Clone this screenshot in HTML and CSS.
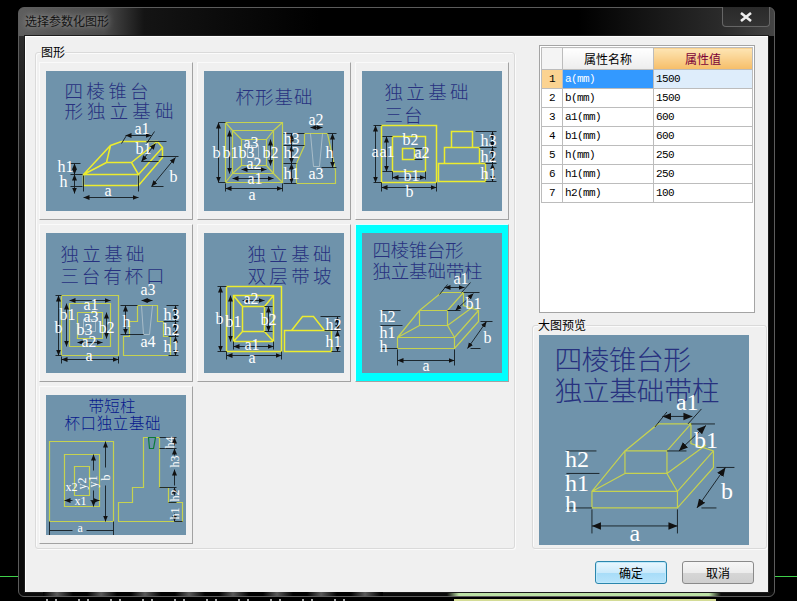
FILE: index.html
```html
<!DOCTYPE html>
<html lang="zh-CN">
<head>
<meta charset="utf-8">
<title>选择参数化图形</title>
<link rel="stylesheet" href="styles.css">
</head>
<body>
<div class="bg-line bg-line-l"></div>
<div class="bg-line bg-line-r"></div>
<div class="bg-strip"></div>
<div class="bg-text"></div>
<div class="window">
  <div class="titlebar">选择参数化图形</div>
  <button class="close" type="button" aria-label="关闭"><svg width="14" height="10" viewBox="0 0 14 10"><path class="close-x" d="M2 1L12 9M12 1L2 9"/></svg></button>
  <div class="client">
    <div class="main">
      <section class="group group-figs">
        <div class="group-label">图形</div>
        <div class="tiles">
          <div class="tile">
            <svg class="fig" width="140" height="140" viewBox="-.5 -.5 140 140">
              <defs><marker id="ar" markerWidth="6" markerHeight="6" refX="6" refY="3" orient="auto-start-reverse" markerUnits="userSpaceOnUse"><path d="M0 .5L6 3L0 5.5z" fill="#111"/></marker></defs>
              <text class="ttl" x="18" y="26" textLength="84">四棱锥台</text>
              <text class="ttl" x="18" y="46" textLength="109">形独立基础</text>
              <g class="y2">
                <path d="M37 103H92V114H37zM37 103L64 74L75 70H111L116 76V86L92 114M92 103L116 76M60 91H85L92 103M37 103L60 91M64 74L60 91M85 91L111 70"/>
              </g>
              <g class="tick"><path d="M37 104V120M92 104V120M75 72L80 64M100 72L108 60M100 70H120M95 90H112M112 85H132M105 115H117M24 92H34M24 103H36M24 115H36"/></g>
              <g class="d" marker-start="url(#ar)" marker-end="url(#ar)">
                <line x1="37" y1="126" x2="92" y2="126"/><line x1="79" y1="64" x2="105" y2="64"/>
                <line x1="109" y1="72" x2="95" y2="90"/><line x1="129" y1="86" x2="105" y2="115"/>
                <line x1="28" y1="92" x2="28" y2="103"/><line x1="28" y1="103" x2="28" y2="122"/>
              </g>
              <g class="t">
                <text x="88" y="62">a1</text><text x="89" y="82">b1</text><text x="123" y="110">b</text>
                <text x="58" y="124">a</text><text x="11" y="100">h1</text><text x="13" y="115">h</text>
              </g>
            </svg>
          </div>
          <div class="tile">
            <svg class="fig" width="140" height="140" viewBox="-.5 -.5 140 140">
              <text class="ttl" x="31" y="32" textLength="77">杯形基础</text>
              <g class="ol">
                <path d="M21 51H78V111H21zM28 59H69V102H28zM37 68H62V94H37zM21 51L28 59M78 51L69 59M21 111L28 102M78 111L69 102M28 59L37 68M69 59L62 68M28 102L37 94M69 102L62 94"/>
                <path d="M100 62H123L131 99V112H92V92L100 74z"/>
              </g>
              <path class="lt" d="M43 74H54V86H43zM106 62L109 95H115L118 62"/>
              <g class="tick"><path d="M14 51H21M14 111H21M21 112V120M78 112V120M79 62H100M79 74H100M79 92H92M79 112H92M123 62H132M117 96H132"/></g>
              <g class="d" marker-start="url(#ar)" marker-end="url(#ar)">
                <line x1="14" y1="51" x2="14" y2="111"/><line x1="25" y1="59" x2="25" y2="102"/>
                <line x1="21" y1="117" x2="78" y2="117"/><line x1="28" y1="107" x2="69" y2="107"/>
                <line x1="37" y1="98" x2="62" y2="98"/><line x1="66" y1="68" x2="66" y2="94"/>
                <line x1="106" y1="56" x2="118" y2="56"/><line x1="87" y1="62" x2="87" y2="74"/>
                <line x1="87" y1="74" x2="87" y2="92"/><line x1="87" y1="92" x2="87" y2="112"/>
                <line x1="128" y1="62" x2="128" y2="96"/>
              </g>
              <g class="t">
                <text x="8" y="86">b</text><text x="18" y="86">b1b3</text><text x="58" y="86">b2</text>
                <text x="39" y="76">a3</text><text x="42" y="97">a2</text><text x="43" y="112">a1</text>
                <text x="44" y="128">a</text><text x="104" y="53">a2</text><text x="79" y="72">h3</text>
                <text x="79" y="86">h2</text><text x="79" y="107">h1</text><text x="121" y="86">h</text><text x="104" y="107">a3</text>
              </g>
            </svg>
          </div>
          <div class="tile">
            <svg class="fig" width="140" height="140" viewBox="-.5 -.5 140 140">
              <text class="ttl" x="22" y="27" textLength="84">独立基础</text>
              <text class="ttl" x="22" y="50" textLength="38">三台</text>
              <g class="y2">
                <path d="M19 54H74V111H19zM30 65H63V100H30zM40 77H52V88H40zM76 92H123V110H76zM82 76H117V92H82zM89 60H110V76H89z"/>
              </g>
              <g class="tick"><path d="M11 54H19M11 111H19M20 65H30M20 100H30M19 111V120M74 111V120M30 100V108M63 100V108M113 60H134M117 76H134M123 92H134M123 110H134M52 77H60M52 88H60"/></g>
              <g class="d" marker-start="url(#ar)" marker-end="url(#ar)">
                <line x1="13" y1="54" x2="13" y2="111"/><line x1="24" y1="65" x2="24" y2="100"/>
                <line x1="19" y1="116" x2="74" y2="116"/><line x1="30" y1="106" x2="63" y2="106"/>
                <line x1="130" y1="60" x2="130" y2="76"/><line x1="130" y1="76" x2="130" y2="92"/><line x1="130" y1="92" x2="130" y2="110"/>
              </g>
              <g class="t">
                <text x="9" y="85">a</text><text x="17" y="85">a1</text><text x="40" y="73">b2</text><text x="52" y="86">a2</text>
                <text x="41" y="109">b1</text><text x="43" y="125">b</text><text x="118" y="74">h3</text><text x="118" y="90">h2</text><text x="118" y="107">h1</text>
              </g>
            </svg>
          </div>
          <div class="tile">
            <svg class="fig" width="140" height="140" viewBox="-.5 -.5 140 140">
              <text class="ttl" x="14" y="27" textLength="84">独立基础</text>
              <text class="ttl" x="14" y="49" textLength="104">三台有杯口</text>
              <g class="ol">
                <path d="M15 62H72V122H15zM23 70H64V113H23zM31 79H56V105H31z"/>
                <path d="M91 72H111V88H117V103H124V122H77V103H83V88H91z"/>
              </g>
              <path class="lt" d="M37 86H49V98H37zM95 72L97 101H103L106 72"/>
              <g class="tick"><path d="M9 62H15M9 122H15M15 123V130M72 123V130M74 72H91M74 101H97M120 72H132M117 88H132M122 103H132M122 122H132"/></g>
              <g class="d" marker-start="url(#ar)" marker-end="url(#ar)">
                <line x1="12" y1="62" x2="12" y2="122"/><line x1="20" y1="70" x2="20" y2="113"/>
                <line x1="15" y1="126" x2="72" y2="126"/><line x1="23" y1="67" x2="64" y2="67"/>
                <line x1="31" y1="109" x2="56" y2="109"/><line x1="60" y1="79" x2="60" y2="105"/>
                <line x1="79" y1="72" x2="79" y2="101"/><line x1="95" y1="67" x2="106" y2="67"/>
                <line x1="129" y1="72" x2="129" y2="88"/><line x1="129" y1="88" x2="129" y2="103"/><line x1="129" y1="103" x2="129" y2="122"/>
              </g>
              <g class="t">
                <text x="8" y="99">b</text><text x="13" y="86">b1</text><text x="37" y="76">a1</text><text x="37" y="88">a3</text>
                <text x="30" y="101">b3</text><text x="52" y="99">b2</text><text x="35" y="113">a2</text><text x="39" y="127">a</text>
                <text x="94" y="61">a3</text><text x="76" y="93">h</text><text x="94" y="113">a4</text>
                <text x="117" y="86">h3</text><text x="117" y="101">h2</text><text x="117" y="118">h1</text>
              </g>
            </svg>
          </div>
          <div class="tile">
            <svg class="fig" width="140" height="140" viewBox="-.5 -.5 140 140">
              <text class="ttl" x="43" y="27" textLength="84">独立基础</text>
              <text class="ttl" x="43" y="49" textLength="84">双层带坡</text>
              <g class="y2">
                <path d="M22 53H77V118H22zM29 62H69V108H29zM38 73H60V98H38zM29 62L38 73M69 62L60 73M29 108L38 98M69 108L60 98"/>
                <path d="M80 97H127V118H80zM87 97L98 83H109L120 97"/>
              </g>
              <g class="tick"><path d="M13 53H22M13 118H22M22 118V126M77 118V126M29 108V116M69 108V116M116 83H136M120 97H136M127 118H136M60 73H68M60 98H68"/></g>
              <g class="d" marker-start="url(#ar)" marker-end="url(#ar)">
                <line x1="16" y1="53" x2="16" y2="118"/><line x1="26" y1="62" x2="26" y2="108"/>
                <line x1="22" y1="122" x2="77" y2="122"/><line x1="29" y1="113" x2="69" y2="113"/>
                <line x1="38" y1="67" x2="60" y2="67"/><line x1="64" y1="73" x2="64" y2="98"/>
                <line x1="133" y1="83" x2="133" y2="97"/><line x1="133" y1="97" x2="133" y2="118"/>
              </g>
              <g class="t">
                <text x="11" y="90">b</text><text x="21" y="93">b1</text><text x="39" y="70">a2</text><text x="56" y="91">b2</text>
                <text x="40" y="116">a1</text><text x="44" y="129">a</text><text x="121" y="96">h2</text><text x="121" y="113">h1</text>
              </g>
            </svg>
          </div>
          <div class="tile tile-selected">
            <svg class="fig" width="140" height="140" viewBox="-.5 -.5 140 140">
              <text class="ttl" x="10" y="23" textLength="91">四棱锥台形</text>
              <text class="ttl" x="10" y="44" textLength="110">独立基础带柱</text>
              <g class="ol">
                <path d="M35 104H92V115H35zM57 77H85V92H57zM35 104L57 77L79 59H101L85 77M101 59V72L116 77V88L92 115M92 104L116 77M35 104L57 92M85 92L92 104M85 92L111 73"/>
              </g>
              <g class="tick"><path d="M35 116V132M92 116V132M77 61L85 51M99 59L108 49M101 59H117M85 77H98M108 115H118M118 88H130M18 77H38M18 92H40M18 115H35"/></g>
              <g class="d" marker-start="url(#ar)" marker-end="url(#ar)">
                <line x1="35" y1="127" x2="92" y2="127"/><line x1="82" y1="54" x2="102" y2="54"/>
                <line x1="111" y1="60" x2="93" y2="77"/><line x1="124" y1="88" x2="105" y2="115"/>
              </g>
              <g class="t">
                <text x="91" y="50">a1</text><text x="103" y="75">b1</text><text x="121" y="109">b</text><text x="60" y="137">a</text>
                <text x="17" y="88">h2</text><text x="17" y="104">h1</text><text x="17" y="118">h</text>
              </g>
            </svg>
          </div>
          <div class="tile">
            <svg class="fig" width="140" height="140" viewBox="-.5 -.5 140 140">
              <text class="ttl ttl-navy" x="42" y="16" textLength="47">带短柱</text>
              <text class="ttl ttl-navy" x="18" y="33" textLength="96">杯口独立基础</text>
              <g class="ol">
                <path d="M3 46H67V126H3zM18 59H53V111H18zM28 71H43V100H28z"/>
                <path d="M97 42H113V92H122V107H136V126H72V107H86V92H97z"/>
              </g>
              <path class="grn" d="M102 42H109L107 53H103z"/>
              <g class="tick"><path d="M3 126V140M67 126V140M3 135H26M40 135H67M113 42H130M113 53H130M113 92H130M122 107H130M128 126H136"/></g>
              <g class="d" marker-end="url(#ar)">
                <line x1="59" y1="90" x2="59" y2="126"/><line x1="59" y1="72" x2="59" y2="46"/>
                <line x1="47" y1="95" x2="47" y2="111"/><line x1="47" y1="75" x2="47" y2="59"/>
                <line x1="26" y1="105" x2="18" y2="105"/><line x1="44" y1="105" x2="53" y2="105"/>
                <line x1="128" y1="100" x2="128" y2="92"/><line x1="128" y1="90" x2="128" y2="74"/><line x1="128" y1="60" x2="128" y2="53"/>
                <line x1="128" y1="118" x2="128" y2="126"/><line x1="128" y1="50" x2="128" y2="42"/>
              </g>
              <g class="t t-small">
                <text x="19" y="95">x2</text><text x="28" y="109">x1</text><text x="31" y="136">a</text>
                <text transform="translate(63 85) rotate(-90)">b</text>
                <text transform="translate(50 92) rotate(-90)">y1</text>
                <text transform="translate(39 94) rotate(-90)">y2</text>
                <text transform="translate(127 53) rotate(-90)">h4</text>
                <text transform="translate(132 72) rotate(-90)">h3</text>
                <text transform="translate(132 106) rotate(-90)">h2</text>
                <text transform="translate(132 124) rotate(-90)">h1</text>
              </g>
            </svg>
          </div>
        </div>
      </section>
      <div class="side">
        <div class="grid-panel">
          <table class="props">
            <colgroup><col class="c-idx"><col class="c-name"><col class="c-val"></colgroup>
            <thead><tr><th class="h-idx"></th><th class="h-name">属性名称</th><th class="h-val">属性值</th></tr></thead>
            <tbody>
              <tr class="row-active"><td class="idx">1</td><td class="name">a(mm)</td><td class="val">1500</td></tr>
              <tr><td class="idx">2</td><td class="name">b(mm)</td><td class="val">1500</td></tr>
              <tr><td class="idx">3</td><td class="name">a1(mm)</td><td class="val">600</td></tr>
              <tr><td class="idx">4</td><td class="name">b1(mm)</td><td class="val">600</td></tr>
              <tr><td class="idx">5</td><td class="name">h(mm)</td><td class="val">250</td></tr>
              <tr><td class="idx">6</td><td class="name">h1(mm)</td><td class="val">250</td></tr>
              <tr><td class="idx">7</td><td class="name">h2(mm)</td><td class="val">100</td></tr>
            </tbody>
          </table>
        </div>
        <section class="group group-preview">
          <div class="group-label">大图预览</div>
          <svg class="fig" width="210" height="210" viewBox="-.3 -.3 140 140">
            <text class="ttl" x="10" y="23" textLength="91">四棱锥台形</text>
            <text class="ttl" x="10" y="44" textLength="110">独立基础带柱</text>
            <g class="ol ol-thin">
              <path d="M35 104H92V115H35zM57 77H85V92H57zM35 104L57 77L79 59H101L85 77M101 59V72L116 77V88L92 115M92 104L116 77M35 104L57 92M85 92L92 104M85 92L111 73"/>
            </g>
            <g class="tick tick-thin"><path d="M35 116V132M92 116V132M77 61L85 51M99 59L108 49M101 59H117M85 77H98M108 115H118M118 88H130M18 77H38M18 92H40M18 115H35"/></g>
            <g class="d d-thin" marker-start="url(#ar)" marker-end="url(#ar)">
              <line x1="35" y1="127" x2="92" y2="127"/><line x1="82" y1="54" x2="102" y2="54"/>
              <line x1="111" y1="60" x2="93" y2="77"/><line x1="124" y1="88" x2="105" y2="115"/>
            </g>
            <g class="t">
              <text x="91" y="50">a1</text><text x="103" y="75">b1</text><text x="121" y="109">b</text><text x="60" y="137">a</text>
              <text x="17" y="88">h2</text><text x="17" y="104">h1</text><text x="17" y="118">h</text>
            </g>
          </svg>
        </section>
      </div>
    </div>
    <div class="footer">
      <button class="btn btn-primary" type="button">确定</button>
      <button class="btn" type="button">取消</button>
    </div>
  </div>
</div>
</body>
</html>
```
FILE: styles.css
```css
* { box-sizing: border-box; }
html, body { margin: 0; padding: 0; }
body {
  width: 797px;
  height: 601px;
  overflow: hidden;
  position: relative;
  background: #000;
  padding: 7px 0 0 18px;
  font-family: "Noto Sans CJK SC", "Liberation Sans", sans-serif;
  font-size: 12px;
  color: #000;
}

/* desktop behind the dialog */
.bg-line { position: absolute; top: 576px; height: 1px; background: #3fd04a; }
.bg-line-l { left: 0; width: 18px; }
.bg-line-r { left: 775px; width: 22px; }
.bg-strip { position: absolute; left: 454px; top: 599px; width: 262px; height: 2px; background: #d4dc96; }
.bg-text {
  position: absolute; left: 46px; top: 599px; width: 305px; height: 2px;
  background: repeating-linear-gradient(90deg, #a8a8a8 0 2px, #000 2px 9px, #a8a8a8 9px 11px, #000 11px 32px);
}

/* window frame */
.window {
  position: relative;
  width: 757px;
  height: 590px;
  padding: 0 5px 4px;
  border: 1px solid #5c5c5c;
  border-radius: 6px;
  background:
    linear-gradient(90deg, #0a0a0a 0 428px, #bde2a5 440px 690px, #0a0a0a 702px) left bottom / 100% 4px no-repeat,
    linear-gradient(90deg, #5e5e5e 0, #4c4c4c 85px, #141414 125px, #000 300px, #000 560px, #2a2a2a 700px, #444 100%) left top / 100% 28px no-repeat,
    linear-gradient(180deg, #333 0, #0a0a0a 200px) left top / 6px 100% no-repeat,
    #050505;
}
.window::after {
  content: "";
  position: absolute;
  left: 24px;
  bottom: 0;
  width: 340px;
  height: 4px;
  background: repeating-linear-gradient(90deg, #000 0, #5a5a5a 14px, #000 30px, #000 44px);
}
.titlebar {
  height: 27px;
  padding: 5px 0 0 1px;
  font-size: 12px;
  line-height: 16px;
  color: #141414;
  text-shadow: 0 0 6px #bbb;
}
.close {
  position: absolute;
  top: -1px;
  right: 4px;
  width: 48px;
  height: 20px;
  padding: 0;
  border: 1px solid #666;
  border-top: 0;
  border-radius: 0 0 4px 4px;
  background: linear-gradient(180deg, #2a2a2a, #333);
  display: flex;
  align-items: center;
  justify-content: center;
}
.close-x { fill: none; stroke: #eee; stroke-width: 2.6; }

.client {
  width: 745px;
  height: 558px;
  padding: 9px 1px 0 10px;
  background: #f0f0f0;
  border: 1px solid #1c1c1c;
  box-shadow: inset 1px 1px 0 #fff;
}
.main { display: flex; align-items: flex-start; gap: 17px; }

/* group boxes */
.group {
  flex: none;
  border: 1px solid #dadada;
  border-radius: 3px;
  box-shadow: inset 1px 1px 0 #fbfbfb, 1px 1px 0 #fbfbfb;
}
.group-label {
  width: fit-content;
  height: 14px;
  margin-top: -8px;
  margin-bottom: 3px;
  font-size: 12px;
  line-height: 14px;
  background: #f0f0f0;
  color: #000;
}
.group-figs {
  width: 480px;
  height: 497px;
  margin-top: 7px;
  padding: 0 3px;
}
.group-figs .group-label { margin-left: 2px; }

.tiles { display: grid; grid-template-columns: repeat(3, 154px); grid-auto-rows: 158px; gap: 4px; }
.tile {
  display: flex;
  align-items: center;
  justify-content: center;
  background: #f0f0f0;
  border: 1px solid;
  border-color: #fafafa #a2a2a2 #a2a2a2 #fafafa;
}
.tile-selected { background: #00ffff; border-color: #dff #a2a2a2 #a2a2a2 #dff; }

/* drawings */
.fig { display: block; background: #6f93ab; flex: none; }
.ttl {
  font-family: "Noto Sans CJK SC", sans-serif;
  font-weight: 300;
  font-size: 18.5px;
  fill: #27317f;
}
.ttl-navy { font-size: 15.5px; fill: #08188c; }
.y2 path { fill: none; stroke: #ecec2e; stroke-width: 1.5; }
.ol path { fill: none; stroke: #c6d250; stroke-width: 1.2; }
.ol-thin path { stroke-width: .8; }
.lt { fill: none; stroke: #b6c6cf; stroke-width: .8; }
.grn { fill: none; stroke: #0b7a3a; stroke-width: 1.2; }
.tick path { fill: none; stroke: #141c20; stroke-width: .9; }
.tick-thin path { stroke-width: .6; }
.d line { stroke: #141c20; stroke-width: .9; fill: none; }
.d-thin line { stroke-width: .6; }
.t text {
  font-family: "Liberation Serif", serif;
  font-size: 16px;
  fill: #fff;
}
.t-small text { font-size: 12px; }

/* right column */
.side { flex: none; width: 235px; }
.grid-panel {
  width: 216px;
  height: 268px;
  margin-left: 7px;
  padding: 1px 0 0 1px;
  background: #fff;
  border: 1px solid #a4a4a4;
}
.props {
  table-layout: fixed;
  border-collapse: collapse;
  width: 211px;
  font-size: 11px;
}
.c-idx { width: 21px; }
.c-name { width: 91px; }
.c-val { width: 99px; }
.props th, .props td { border: 1px solid #bcbcbc; padding: 0; height: 19px; line-height: 16px; overflow: hidden; white-space: nowrap; }
.props thead tr { height: 22px; }
.props th { height: 22px; font-weight: 400; font-size: 12px; text-align: center; }
.h-idx { background: #f4f4f4; }
.h-name { background: linear-gradient(180deg, #fff, #ececec); }
.h-val { background: linear-gradient(180deg, #fde5b4, #f6bd68); color: #7a0038; }
.idx { text-align: center; background: #fff; font-family: "Liberation Mono", monospace; letter-spacing: -.6px; }
.name, .val { padding-left: 2px !important; font-family: "Liberation Mono", monospace; letter-spacing: -.6px; }
.row-active .idx { background: #fbd391; }
.row-active .name { background: #3399ff; color: #fff; }
.row-active .val { background: #deedfb; }

.group-preview {
  width: 235px;
  height: 224px;
  margin-top: 12px;
  padding: 0 0 0 6px;
}
.group-preview .group-label { margin-left: -1px; }

/* footer */
.footer { display: flex; justify-content: flex-end; gap: 15px; margin-top: 12px; padding-right: 13px; }
.btn {
  width: 72px;
  height: 23px;
  padding: 0;
  font-family: "Noto Sans CJK SC", sans-serif;
  font-size: 12px;
  line-height: 20px;
  color: #000;
  border: 1px solid #8a8a8a;
  border-radius: 3px;
  background: linear-gradient(180deg, #f6f6f6 0, #ececec 50%, #d6d6d6 52%, #cfcfcf 100%);
}
.btn-primary {
  border-color: #2b86ad;
  box-shadow: inset 0 0 0 1px #bfe9fb;
  background: linear-gradient(180deg, #eaf7fe 0, #cbeafb 50%, #a7dcf8 52%, #b8e4fb 100%);
}
```
